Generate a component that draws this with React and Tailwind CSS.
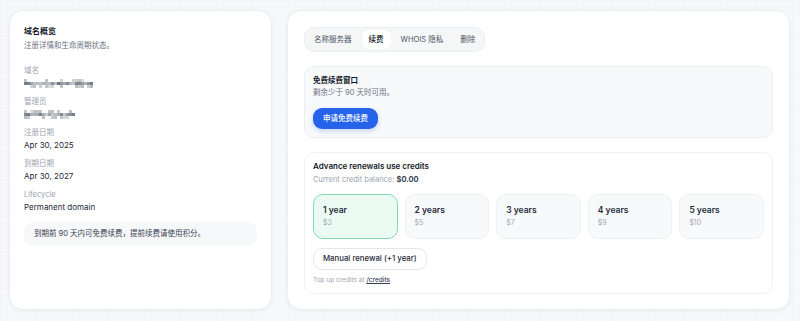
import React from "react";

const FONT = { fontFamily: "Inter, 'Noto Sans CJK SC', sans-serif" };

function Mosaic({ cols, seed, width }) {
  const rows = 3;
  const cells = [];
  let s = seed;
  const rnd = () => {
    s = (s * 9301 + 49297) % 233280;
    return s / 233280;
  };
  for (let c = 0; c < cols; c++) {
    for (let r = 0; r < rows; r++) {
      const v = rnd();
      let op = r === 1 ? 0.3 + v * 0.5 : v < 0.5 ? 0 : v * 0.4;
      if (op > 0.02) {
        cells.push(
          <rect key={c + "-" + r} x={c * 3} y={r * 3} width="3" height="3" fill="#4b5563" opacity={op} />
        );
      }
    }
  }
  return (
    <svg width={width || cols * 3} height="9" viewBox={`0 0 ${cols * 3} 9`} className="block my-[1.5px]">
      {cells}
    </svg>
  );
}

function Field({ label, children }) {
  return (
    <div className="flex flex-col">
      <div className="text-[7.5px] leading-[12px] text-[#9ca3af]">{label}</div>
      <div className="text-[8px] leading-[12px] text-[#1f2937] h-[12px]">{children}</div>
    </div>
  );
}

function YearCard({ title, price, active }) {
  return (
    <div
      className={
        active
          ? "flex-1 h-[45px] rounded-[10px] border border-[#7fd9b3] bg-[#ebfbf4] px-[9px] pt-[9px]"
          : "flex-1 h-[45px] rounded-[10px] border border-[#eef0f3] bg-[#f8f9fb] px-[9px] pt-[9px]"
      }
    >
      <div className="text-[8.5px] leading-[12px] font-semibold text-[#1f2937]">{title}</div>
      <div className="text-[7px] leading-[11px] text-[#a3a8b1] mt-[1px]">{price}</div>
    </div>
  );
}

export default function App() {
  return (
    <div
      style={FONT}
      className="w-[800px] h-[321px] overflow-hidden bg-[#f7f8fa] bg-[linear-gradient(to_right,#f3f4f6_1px,transparent_1px),linear-gradient(to_bottom,#f3f4f6_1px,transparent_1px)] bg-[size:36px_36px] flex gap-[15px] pl-[9px] pr-[10px] pt-[10px]"
    >
      {/* Left card */}
      <div className="w-[263px] h-[300px] shrink-0 bg-white rounded-[14px] border border-[#eceef1] shadow-[0_1px_4px_rgba(15,23,42,0.05)] px-[14px] pt-[13px]">
        <div className="text-[8px] leading-[14px] font-bold text-[#111827]">域名概览</div>
        <div className="text-[7.5px] leading-[13px] text-[#6b7280] mt-[1px]">注册详情和生命周期状态。</div>
        <div className="flex flex-col gap-[7px] mt-[13px]">
          <Field label="域名">
            <Mosaic cols={23} seed={17} />
          </Field>
          <Field label="管理员">
            <Mosaic cols={17} seed={91} />
          </Field>
          <Field label="注册日期">Apr 30, 2025</Field>
          <Field label="到期日期">Apr 30, 2027</Field>
          <Field label="Lifecycle">Permanent domain</Field>
        </div>
        <div className="mt-[9px] h-[24px] rounded-[9px] bg-[#f7f8fa] px-[10px] flex items-center text-[7.5px] text-[#374151]">
          到期前 90 天内可免费续费，提前续费请使用积分。
        </div>
      </div>

      {/* Right card */}
      <div className="flex-1 h-[300px] bg-white rounded-[14px] border border-[#eceef1] shadow-[0_1px_4px_rgba(15,23,42,0.05)] p-4 flex flex-col">
        <div className="self-start flex items-center gap-[3px] p-[2px] h-[25px] rounded-[10px] border border-[#eceef1] bg-[#f5f6f8] text-[7.5px]">
          <div className="px-[7px] h-[19px] flex items-center text-[#4b5563]">名称服务器</div>
          <div className="px-[7px] h-[19px] flex items-center rounded-[7px] bg-white text-[#111827] font-medium">续费</div>
          <div className="px-[7px] h-[19px] flex items-center text-[#4b5563]">WHOIS 隐私</div>
          <div className="px-[7px] h-[19px] flex items-center text-[#4b5563]">删除</div>
        </div>

        <div className="mt-[14px] rounded-[10px] border border-[#eceef1] bg-[#f8f9fb] p-2 h-[72px]">
          <div className="text-[7.5px] leading-[12px] font-bold text-[#111827]">免费续费窗口</div>
          <div className="text-[7.5px] leading-[11px] text-[#6b7280]">剩余少于 90 天时可用。</div>
          <button className="mt-[10px] h-[21px] px-[10px] rounded-[9px] bg-[#2563eb] text-white text-[7.5px] font-medium shadow-[0_2px_5px_rgba(37,99,235,0.25)]">
            申请免费续费
          </button>
        </div>

        <div className="mt-[14px] rounded-[10px] border border-[#eef0f3] bg-white p-2 h-[142px]">
          <div className="text-[8px] leading-[11px] font-semibold text-[#111827]">Advance renewals use credits</div>
          <div className="text-[7.5px] leading-[12px] mt-[2px] text-[#9ca3af]">
            Current credit balance: <span className="font-bold text-[#374151]">$0.00</span>
          </div>
          <div className="flex gap-[7px] mt-[8px]">
            <YearCard title="1 year" price="$3" active />
            <YearCard title="2 years" price="$5" />
            <YearCard title="3 years" price="$7" />
            <YearCard title="4 years" price="$9" />
            <YearCard title="5 years" price="$10" />
          </div>
          <button className="mt-[9px] h-[22px] px-[9px] rounded-[9px] border border-[#e5e7eb] bg-white text-[7.8px] font-medium text-[#1f2937]">
            Manual renewal (+1 year)
          </button>
          <div className="mt-[5px] text-[6.5px] leading-[10px] text-[#9ca3af]">
            Top up credits at <span className="underline text-[#374151] font-medium">/credits</span>.
          </div>
        </div>
      </div>
    </div>
  );
}
